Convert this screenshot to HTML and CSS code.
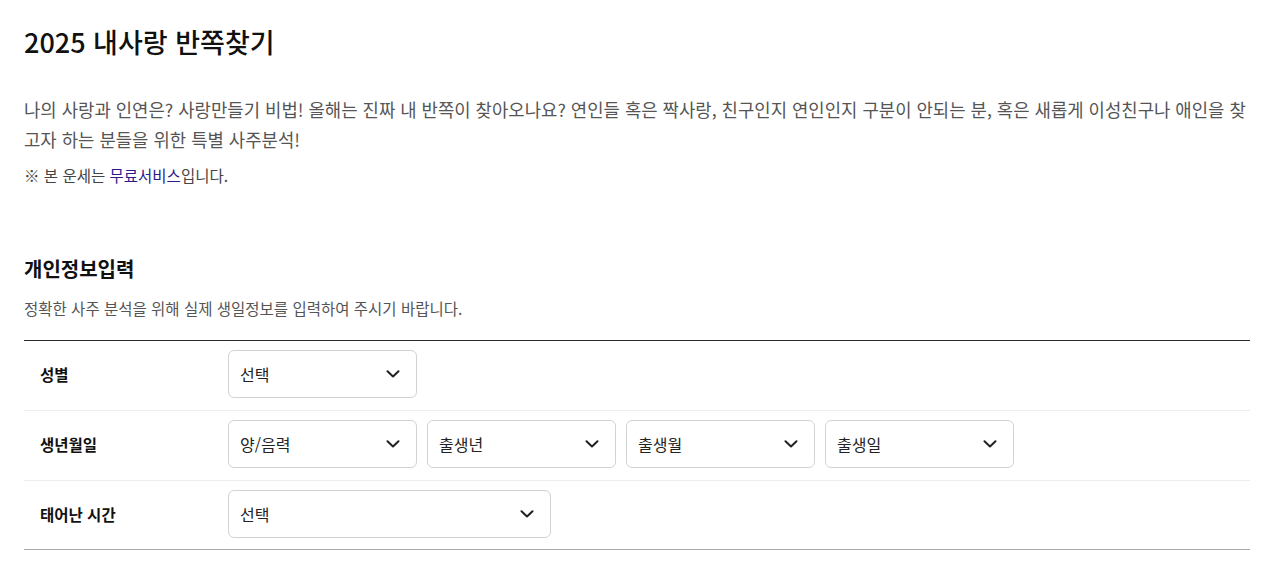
FILE: index.html
```html
<!DOCTYPE html>
<html lang="ko">
<head>
<meta charset="utf-8">
<title>2025 내사랑 반쪽찾기</title>
<link rel="stylesheet" href="styles.css">
</head>
<body>
<main class="page">
  <h1 class="title">2025 내사랑 반쪽찾기</h1>
  <p class="intro">나의 사랑과 인연은? 사랑만들기 비법! 올해는 진짜 내 반쪽이 찾아오나요? 연인들 혹은 짝사랑, 친구인지 연인인지 구분이 안되는 분, 혹은 새롭게 이성친구나 애인을 찾고자 하는 분들을 위한 특별 사주분석!</p>
  <p class="note">※ 본 운세는 <span class="free">무료서비스</span>입니다.</p>

  <section class="info">
    <h2 class="info-title">개인정보입력</h2>
    <p class="info-desc">정확한 사주 분석을 위해 실제 생일정보를 입력하여 주시기 바랍니다.</p>

    <div class="form">
      <div class="row">
        <div class="label">성별</div>
        <div class="fields">
          <div class="select">
            <span>선택</span>
            <svg class="chev" width="14" height="8" viewBox="0 0 14 8"><path d="M1.5 1.2 L7 6.5 L12.5 1.2" fill="none" stroke="#222" stroke-width="2" stroke-linecap="round" stroke-linejoin="round"/></svg>
          </div>
        </div>
      </div>
      <div class="row">
        <div class="label">생년월일</div>
        <div class="fields">
          <div class="select">
            <span>양/음력</span>
            <svg class="chev" width="14" height="8" viewBox="0 0 14 8"><path d="M1.5 1.2 L7 6.5 L12.5 1.2" fill="none" stroke="#222" stroke-width="2" stroke-linecap="round" stroke-linejoin="round"/></svg>
          </div>
          <div class="select">
            <span>출생년</span>
            <svg class="chev" width="14" height="8" viewBox="0 0 14 8"><path d="M1.5 1.2 L7 6.5 L12.5 1.2" fill="none" stroke="#222" stroke-width="2" stroke-linecap="round" stroke-linejoin="round"/></svg>
          </div>
          <div class="select">
            <span>출생월</span>
            <svg class="chev" width="14" height="8" viewBox="0 0 14 8"><path d="M1.5 1.2 L7 6.5 L12.5 1.2" fill="none" stroke="#222" stroke-width="2" stroke-linecap="round" stroke-linejoin="round"/></svg>
          </div>
          <div class="select">
            <span>출생일</span>
            <svg class="chev" width="14" height="8" viewBox="0 0 14 8"><path d="M1.5 1.2 L7 6.5 L12.5 1.2" fill="none" stroke="#222" stroke-width="2" stroke-linecap="round" stroke-linejoin="round"/></svg>
          </div>
        </div>
      </div>
      <div class="row last">
        <div class="label">태어난 시간</div>
        <div class="fields">
          <div class="select wide">
            <span>선택</span>
            <svg class="chev" width="14" height="8" viewBox="0 0 14 8"><path d="M1.5 1.2 L7 6.5 L12.5 1.2" fill="none" stroke="#222" stroke-width="2" stroke-linecap="round" stroke-linejoin="round"/></svg>
          </div>
        </div>
      </div>
    </div>
  </section>
</main>
</body>
</html>
```

FILE: styles.css
```css
* { box-sizing: border-box; }

html, body {
  margin: 0;
  padding: 0;
  background: #fff;
}

body {
  font-family: "Noto Sans CJK KR", "Noto Sans", sans-serif;
  color: #111;
}

.page {
  padding: 24px 30px 0 24px;
}

.title {
  margin: 0;
  font-size: 27px;
  line-height: 36px;
  font-weight: 500;
  color: #111;
}

.intro {
  margin: 34px 0 0;
  font-size: 17.8px;
  line-height: 30px;
  color: #555;
}

.note {
  margin: 9px 0 0;
  font-size: 15.5px;
  line-height: 24px;
  color: #444;
}

.free {
  color: #2b1a8c;
}

.info {
  margin-top: 68px;
}

.info-title {
  margin: 0;
  font-size: 20px;
  line-height: 28px;
  font-weight: 700;
  color: #111;
}

.info-desc {
  margin: 13px 0 0;
  font-size: 15.5px;
  line-height: 24px;
  color: #555;
}

.form {
  margin-top: 20px;
  border-top: 1px solid #2a2a2a;
}

.row {
  display: flex;
  align-items: center;
  padding: 9px 0 12px;
  border-bottom: 1px solid #ececec;
}

.row.last {
  padding-bottom: 11px;
  border-bottom: 1px solid #a8a8a8;
}

.label {
  width: 204px;
  flex: none;
  padding-left: 16px;
  font-size: 15.5px;
  font-weight: 700;
  color: #111;
}

.fields {
  display: flex;
  gap: 10px;
}

.select {
  width: 189px;
  height: 48px;
  display: flex;
  align-items: center;
  justify-content: space-between;
  padding: 0 16px 0 11px;
  border: 1px solid #d2d2d2;
  border-radius: 6px;
  background: #fff;
  font-size: 16px;
  color: #222;
}

.select.wide {
  width: 323px;
}

.chev {
  display: block;
  flex: none;
}
```
